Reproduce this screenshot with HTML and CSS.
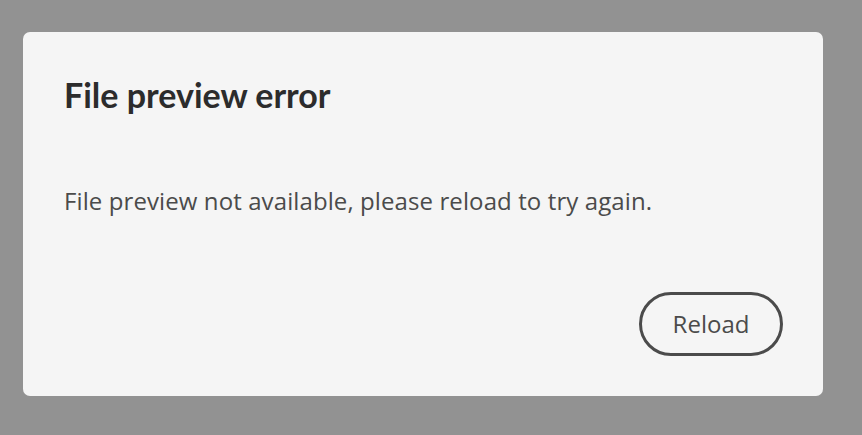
FILE: index.html
```html
<!DOCTYPE html>
<html lang="en">
<head>
<meta charset="utf-8">
<title>File preview error</title>
<link rel="stylesheet" href="styles.css">
</head>
<body>
<div class="overlay">
  <section class="dialog" role="alertdialog" aria-labelledby="dlg-title">
    <h1 class="dialog-title" id="dlg-title">File preview error</h1>
    <p class="dialog-body">File preview not available, please reload to try again.</p>
    <div class="dialog-actions">
      <button class="btn-outline" type="button">Reload</button>
    </div>
  </section>
</div>
</body>
</html>
```

FILE: styles.css
```css
html, body {
  margin: 0;
  padding: 0;
  height: 100%;
}
body {
  background: #929292;
  font-family: "Lato", "Open Sans", sans-serif;
}
.overlay {
  padding: 32px 39px 0 23px;
}
.dialog {
  background: #f5f5f5;
  border-radius: 7px;
  height: 364px;
  box-sizing: border-box;
  padding: 41px 40px 0 41px;
  display: flex;
  flex-direction: column;
}
.dialog-title {
  margin: 0;
  font-size: 34px;
  line-height: 44px;
  font-weight: 700;
  color: #2c2c2c;
}
.dialog-body {
  margin: 69px 0 0 0;
  font-family: "Open Sans", "Lato", sans-serif;
  font-size: 24px;
  line-height: 30px;
  letter-spacing: 0.1px;
  color: #4b4b4b;
}
.dialog-actions {
  display: flex;
  justify-content: flex-end;
  margin-top: 76px;
}
.btn-outline {
  width: 144px;
  height: 64px;
  border: 3px solid #4b4b4b;
  border-radius: 32px;
  background: transparent;
  color: #4b4b4b;
  font-family: "Open Sans", "Lato", sans-serif;
  font-size: 24px;
  padding: 0 0 2px 0;
}
```
